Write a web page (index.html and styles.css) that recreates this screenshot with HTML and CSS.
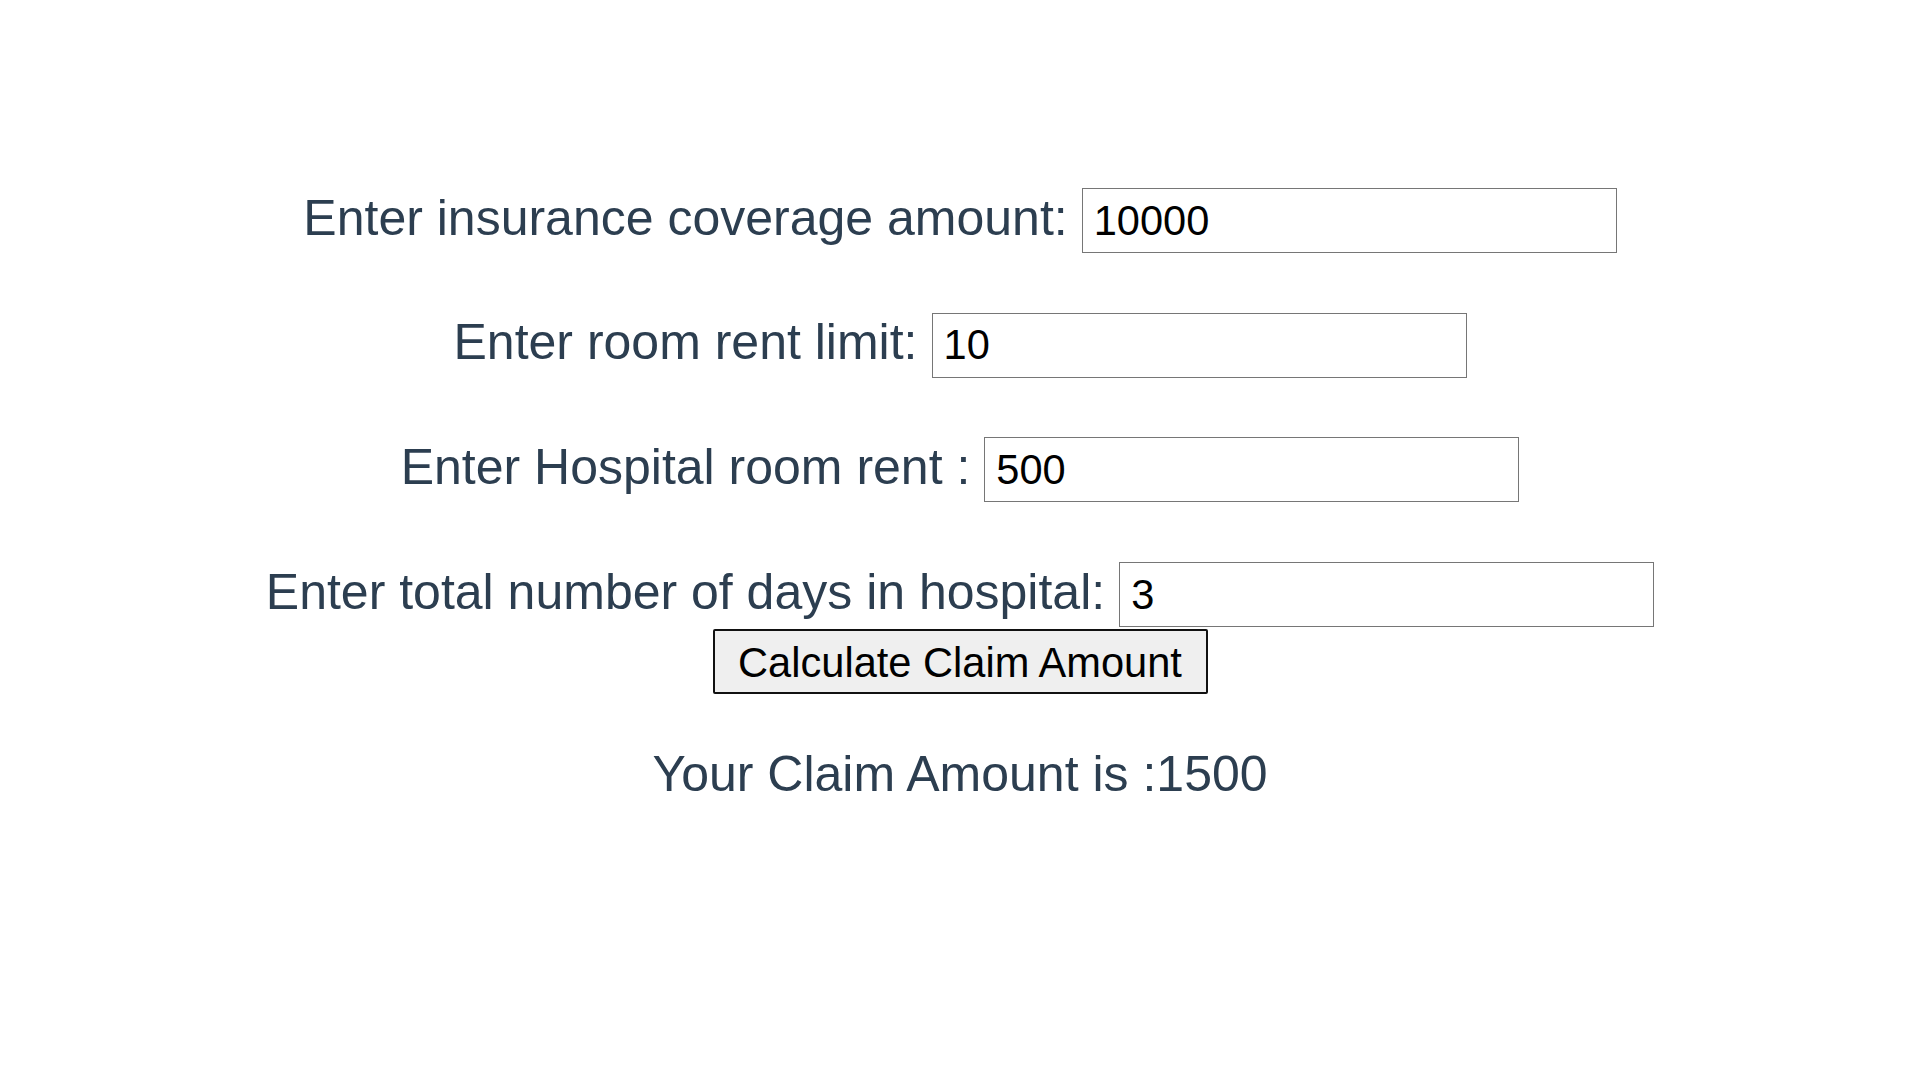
FILE: index.html
```html
<!DOCTYPE html>
<html lang="en">
<head>
<meta charset="utf-8">
<title>Claim Calculator</title>
<link rel="stylesheet" href="styles.css">
</head>
<body>
<div class="app">
  <div class="form">
    <div class="row">
      <label class="label" for="cov">Enter insurance coverage amount:</label>
      <input class="field" id="cov" type="text" value="10000">
    </div>
    <div class="row">
      <label class="label" for="lim">Enter room rent limit:</label>
      <input class="field" id="lim" type="text" value="10">
    </div>
    <div class="row">
      <label class="label" for="rent">Enter Hospital room rent :</label>
      <input class="field" id="rent" type="text" value="500">
    </div>
    <div class="row">
      <label class="label" for="days">Enter total number of days in hospital:</label>
      <input class="field" id="days" type="text" value="3">
    </div>
    <div class="actions">
      <button class="btn" type="button">Calculate Claim Amount</button>
    </div>
  </div>
  <div class="result">Your Claim Amount is :1500</div>
</div>
</body>
</html>
```
FILE: styles.css
```css
html, body {
  margin: 0;
  padding: 0;
  background: #ffffff;
}

body {
  font-family: "Liberation Sans", Arial, sans-serif;
  color: #2c3e50;
}

.app {
  padding-top: 188px;
  text-align: center;
}

.form {
  display: flex;
  flex-direction: column;
  align-items: center;
}

.row {
  display: flex;
  align-items: baseline;
  justify-content: center;
  gap: 14px;
  height: 65px;
  margin-bottom: 59.7px;
}

.row:nth-child(4) {
  margin-bottom: 2px;
}

.label {
  font-size: 50px;
  line-height: 1;
  color: #2c3e50;
}

.field {
  box-sizing: border-box;
  width: 535px;
  height: 65px;
  margin: 0;
  padding: 0 10px 0 11px;
  border: 1px solid #767676;
  border-radius: 0;
  background: #ffffff;
  font-family: "Liberation Sans", Arial, sans-serif;
  font-size: 41.6px;
  color: #000000;
  outline: none;
}

.actions {
  display: flex;
  justify-content: center;
}

.btn {
  box-sizing: border-box;
  height: 65px;
  width: 495px;
  margin: 0;
  padding: 2px 20px 0;
  border: 2px solid #111111;
  border-radius: 2px;
  background: #efefef;
  font-family: "Liberation Sans", Arial, sans-serif;
  font-size: 41.6px;
  color: #000000;
  cursor: pointer;
}

.result {
  margin-top: 51px;
  font-size: 50px;
  color: #2c3e50;
}
```
